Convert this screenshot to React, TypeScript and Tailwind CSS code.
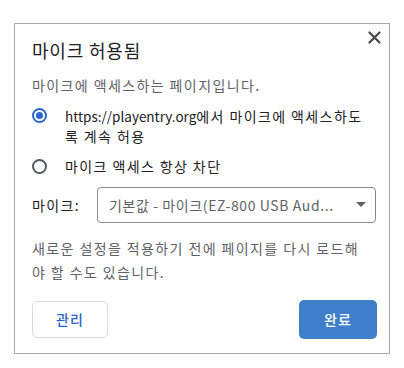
import React from 'react';

const font = { fontFamily: '"Noto Sans CJK KR", "Noto Sans", sans-serif' };

export default function App() {
  return (
    <div className="w-[404px] h-[368px] bg-white pt-[23px] pl-[14px]" style={font}>
      <div className="relative w-[376px] h-[331px] border border-[#a9a9a9] bg-white pl-[17px] pr-[10px] pt-[14px]">
        <button className="absolute right-[5px] top-[3px] w-[20px] h-[20px] flex items-center justify-center">
          <svg width="13" height="13" viewBox="0 0 13 13">
            <path d="M1.5 1.5 L11.5 11.5 M11.5 1.5 L1.5 11.5" stroke="#4a4a4a" strokeWidth="2.3" strokeLinecap="round" />
          </svg>
        </button>

        <h1 className="text-[18px] leading-[24px] tracking-[0.8px] text-[#202124]">마이크 허용됨</h1>
        <p className="mt-[13px] text-[14px] leading-[20px] tracking-[1.4px] text-[#5f6368] whitespace-nowrap">마이크에 액세스하는 페이지입니다.</p>

        <div className="mt-[11px] flex flex-col gap-[10px]">
          <label className="flex items-start gap-[18px]">
            <span className="mt-[2px] w-[15px] h-[15px] shrink-0 rounded-full border-2 border-[#2a66cf] flex items-center justify-center">
              <span className="w-[7px] h-[7px] rounded-full bg-[#2a66cf]" />
            </span>
            <span className="text-[14px] leading-[20px] tracking-[1.4px] text-[#202124] whitespace-nowrap">
              <span className="tracking-normal text-[13.5px]">https://playentry.org</span>에서 마이크에 액세스하도
              <br />
              록 계속 허용
            </span>
          </label>
          <label className="flex items-center gap-[18px]">
            <span className="w-[15px] h-[15px] shrink-0 rounded-full border-2 border-[#555a60]" />
            <span className="text-[14px] leading-[20px] tracking-[1.4px] text-[#202124]">마이크 액세스 항상 차단</span>
          </label>
        </div>

        <div className="mt-[11px] flex items-center">
          <span className="w-[65px] text-[14px] tracking-[1.4px] text-[#202124]">마이크:</span>
          <div className="w-[279px] h-[36px] border border-[#8a8a8a] rounded-[4px] flex items-center pl-[11px] pr-[9px]">
            <span className="flex-1 text-[14px] tracking-[0.6px] text-[#5f6368] whitespace-nowrap overflow-hidden">기본값 - 마이크(EZ-800 USB Aud...</span>
            <svg width="10" height="6" viewBox="0 0 10 6" className="ml-2">
              <path d="M0 0 L10 0 L5 5 Z" fill="#5f6368" />
            </svg>
          </div>
        </div>

        <p className="mt-[13px] text-[14px] leading-[24px] tracking-[1.4px] text-[#5f6368] whitespace-nowrap">
          새로운 설정을 적용하기 전에 페이지를 다시 로드해
          <br />
          야 할 수도 있습니다.
        </p>

        <div className="mt-[16px] flex items-center justify-between">
          <button className="w-[76px] h-[37px] rounded-[5px] border border-[#d7dbe0] text-[14px] tracking-[1px] text-[#2a66cf] font-medium bg-white">
            관리
          </button>
          <button className="mr-[2px] w-[78px] h-[39px] rounded-[5px] bg-[#3f7ec9] text-[14px] tracking-[1px] text-white font-medium">
            완료
          </button>
        </div>
      </div>
    </div>
  );
}
